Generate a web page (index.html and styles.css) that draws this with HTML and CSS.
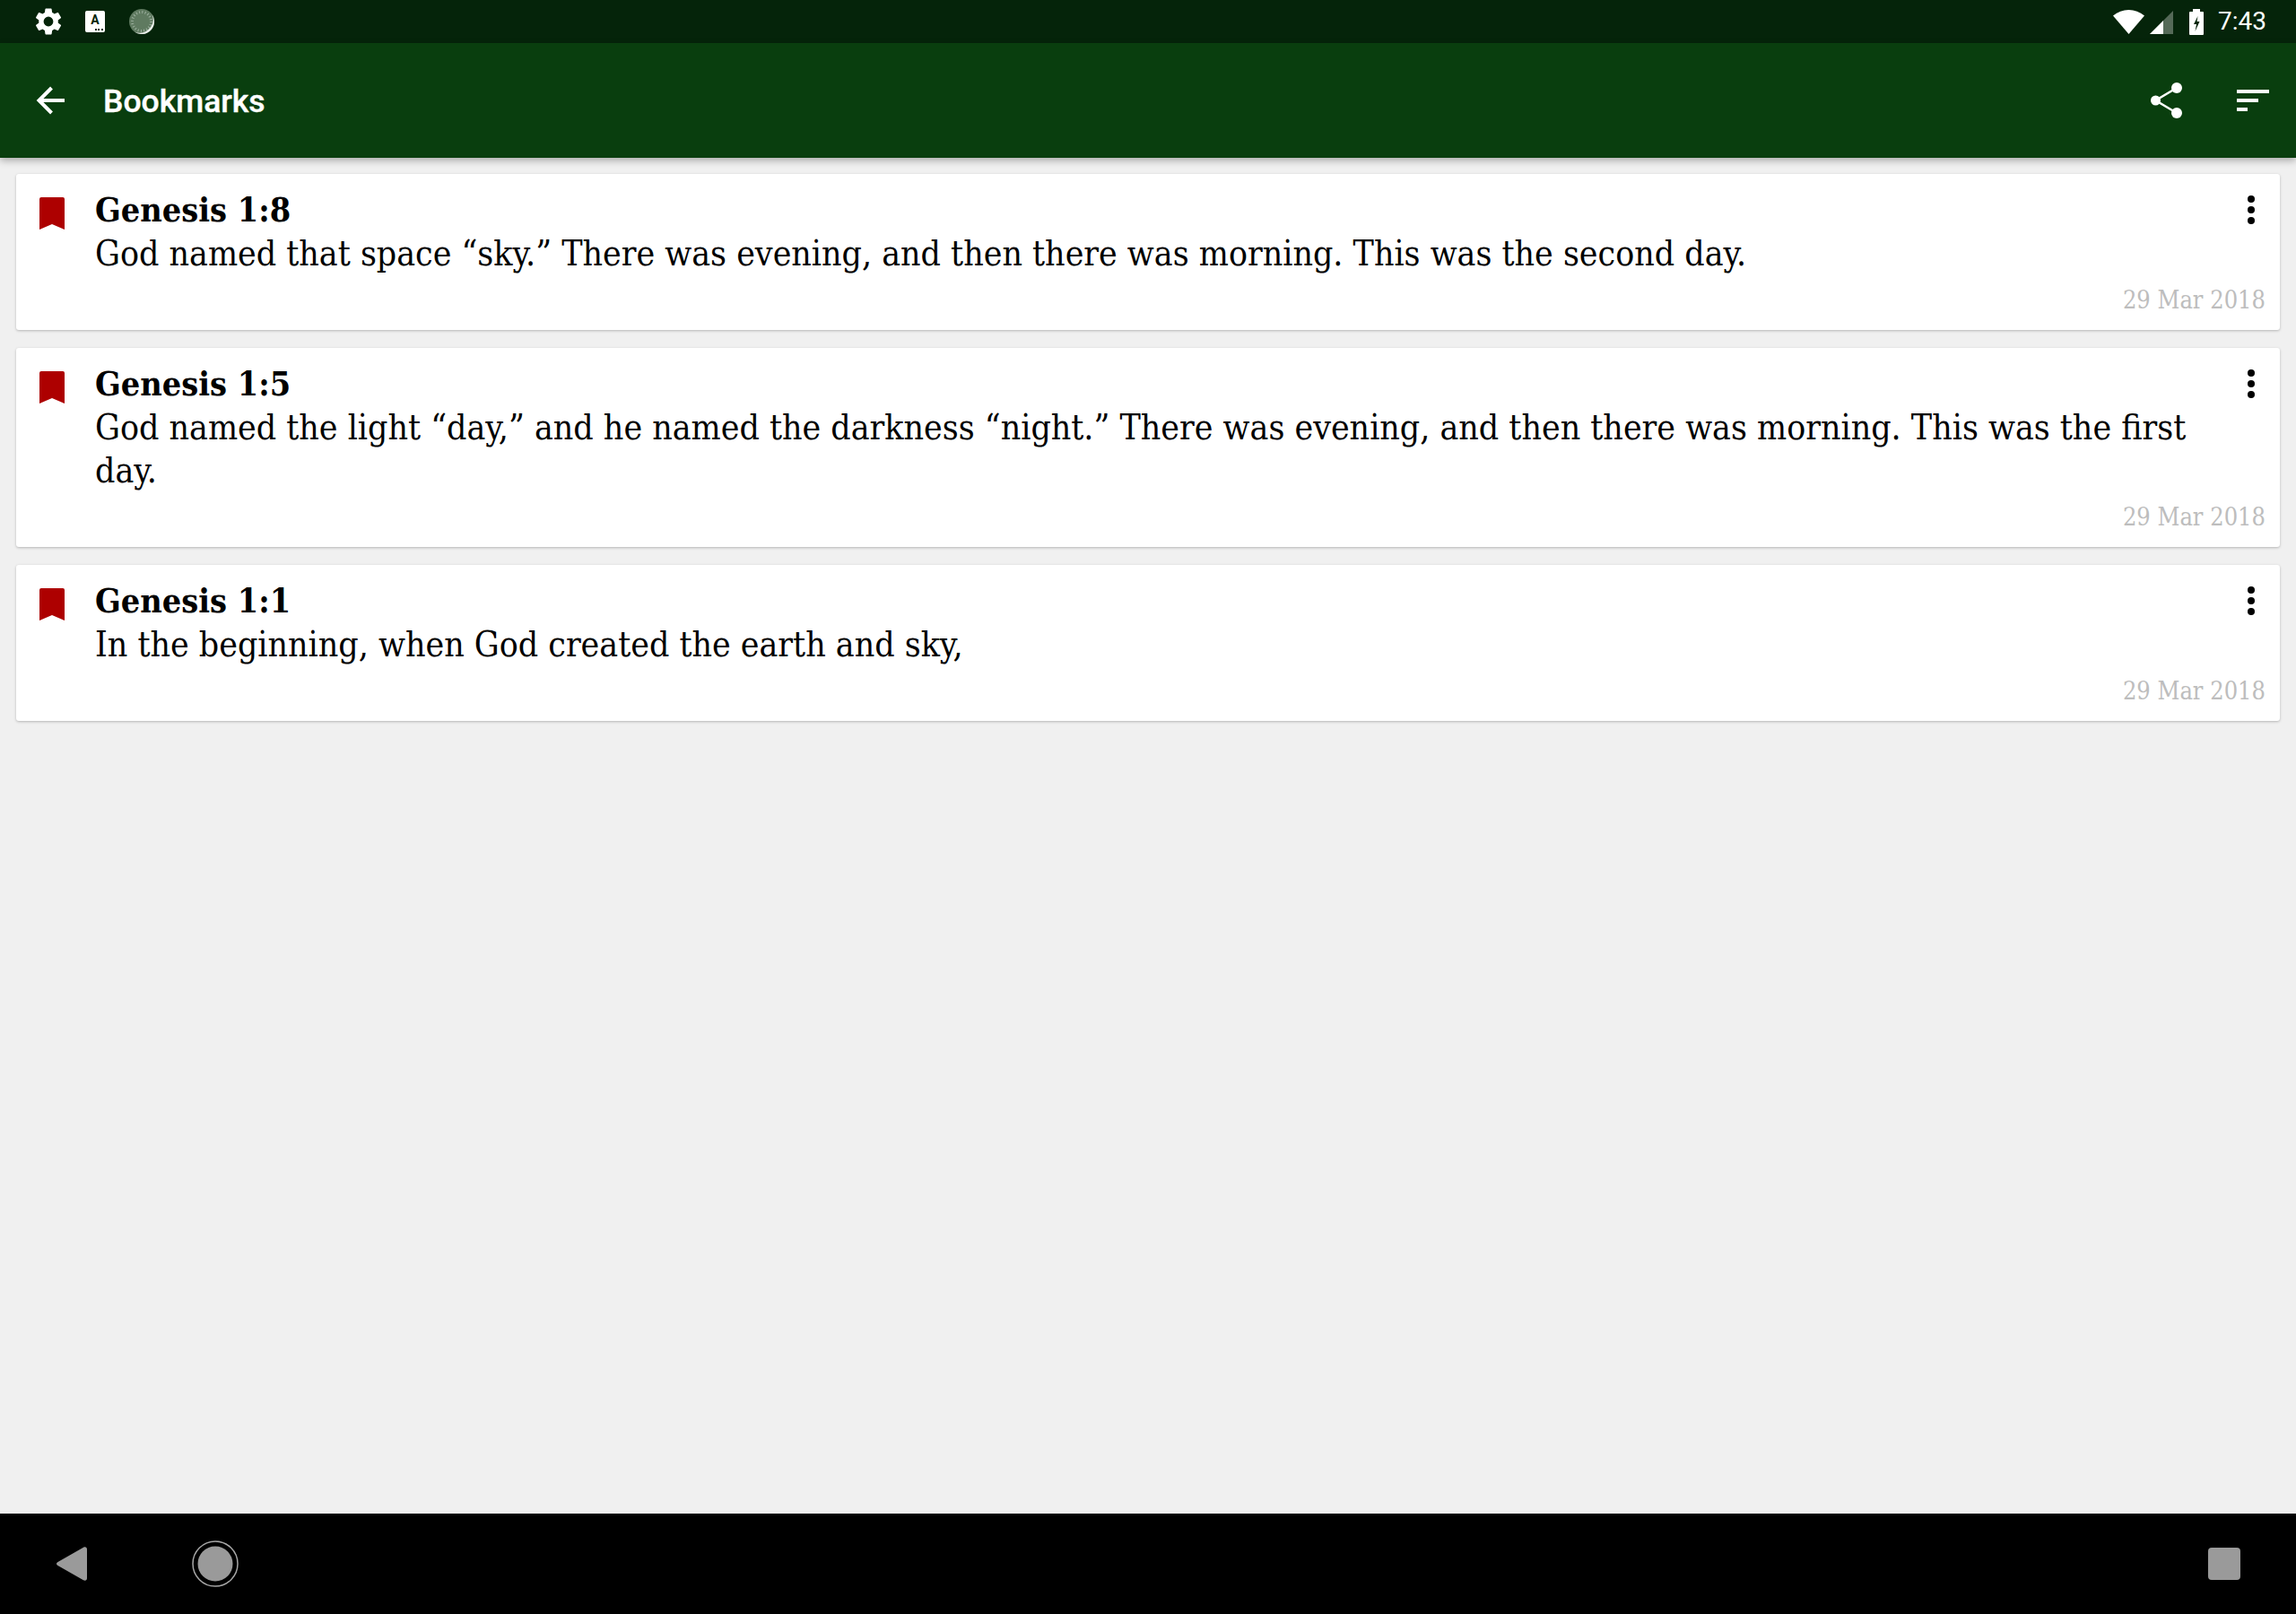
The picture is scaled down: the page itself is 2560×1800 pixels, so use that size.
FILE: index.html
```html
<!DOCTYPE html>
<html lang="en">
<head>
    <meta charset="UTF-8">
    <meta name="viewport" content="width=device-width, initial-scale=1.0">
    <title>Bookmarks</title>
    <link rel="stylesheet" href="styles.css">
</head>
<body>
    <div class="status-bar">
        <div class="status-left">
            <svg class="icon-gear" viewBox="0 0 24 24" fill="#fff"><path d="M19.14 12.94a7.07 7.07 0 0 0 .06-.94 7.07 7.07 0 0 0-.06-.94l2.03-1.58a.49.49 0 0 0 .12-.61l-1.92-3.32a.49.49 0 0 0-.59-.22l-2.39.96a7.03 7.03 0 0 0-1.62-.94l-.36-2.54a.48.48 0 0 0-.48-.41h-3.84a.48.48 0 0 0-.47.41l-.36 2.54c-.59.24-1.13.57-1.62.94l-2.39-.96a.48.48 0 0 0-.59.22L2.75 8.87a.48.48 0 0 0 .12.61l2.03 1.58a7.3 7.3 0 0 0 0 1.88l-2.03 1.58a.49.49 0 0 0-.12.61l1.92 3.32c.12.22.37.29.59.22l2.39-.96c.5.38 1.03.7 1.62.94l.36 2.54c.05.24.24.41.48.41h3.84c.24 0 .44-.17.47-.41l.36-2.54c.59-.24 1.13-.56 1.62-.94l2.39.96c.22.08.47 0 .59-.22l1.92-3.32a.48.48 0 0 0-.12-.61zM12 15.6a3.6 3.6 0 1 1 0-7.2 3.6 3.6 0 0 1 0 7.2z"/></svg>
            <div class="icon-keyboard">
                <span class="key-letter">A</span>
                <span class="key-dots"></span>
            </div>
            <svg class="icon-sync" viewBox="0 0 28 28">
                <circle cx="14" cy="14" r="14" fill="#5f7a60"/>
                <circle cx="14" cy="14" r="10.5" fill="none" stroke="#9db09f" stroke-width="3" stroke-dasharray="1 2.3"/>
                <path d="M25.500 6A14 14 0 0 1 6 25.500 15 15 0 0 0 25.500 6z" fill="#e9eee9"/>
            </svg>
        </div>
        <div class="status-right">
            <svg class="icon-wifi" viewBox="0 0 35 27"><path d="M17.500 0C11 0 5.200 2.200 0 6.500L17.500 27 35 6.500C29.800 2.200 24 0 17.500 0z" fill="#fff"/></svg>
            <svg class="icon-signal" viewBox="0 0 26 26">
                <path d="M26 0v26H0z" fill="#fff" fill-opacity=".32"/>
                <path d="M15 11v15H0z" fill="#fff"/>
            </svg>
            <svg class="icon-battery" viewBox="0 0 16 29"><path fill="#fff" fill-rule="evenodd" d="M4 0h8v3h3a1 1 0 0 1 1 1v24a1 1 0 0 1-1 1H1a1 1 0 0 1-1-1V4a1 1 0 0 1 1-1h3zM9.500 8 5 17h3l-1.500 8L11.500 14H8.500z"/></svg>
            <span class="clock">7:43</span>
        </div>
    </div>

    <div class="toolbar">
        <svg class="icon-back" viewBox="0 0 32 32"><path d="M32 16H3M17.500 2 3.500 16l14 14" fill="none" stroke="#fff" stroke-width="4"/></svg>
        <h1 class="toolbar-title">Bookmarks</h1>
        <svg class="icon-share" viewBox="0 0 36 40">
            <circle cx="29" cy="6" r="6" fill="#fff"/>
            <circle cx="5.500" cy="20" r="5.500" fill="#fff"/>
            <circle cx="29" cy="34" r="6" fill="#fff"/>
            <path d="M29 6 5.500 20 29 34" fill="none" stroke="#fff" stroke-width="2.500"/>
        </svg>
        <div class="icon-sort">
            <span class="sort-long"></span>
            <span class="sort-mid"></span>
            <span class="sort-short"></span>
        </div>
    </div>

    <div class="bookmark-list">
        <div class="card">
            <svg class="icon-bookmark" viewBox="0 0 28 36"><path d="M2 0h24a2 2 0 0 1 2 2v34l-14-6-14 6V2a2 2 0 0 1 2-2z" fill="#ad0000"/></svg>
            <div class="card-text">
                <div class="verse-ref">Genesis 1:8</div>
                <div class="verse-text">God named that space “sky.” There was evening, and then there was morning. This was the second day.</div>
            </div>
            <div class="more"><span></span><span></span><span></span></div>
            <div class="card-date">29 Mar 2018</div>
        </div>
        <div class="card">
            <svg class="icon-bookmark" viewBox="0 0 28 36"><path d="M2 0h24a2 2 0 0 1 2 2v34l-14-6-14 6V2a2 2 0 0 1 2-2z" fill="#ad0000"/></svg>
            <div class="card-text">
                <div class="verse-ref">Genesis 1:5</div>
                <div class="verse-text">God named the light “day,” and he named the darkness “night.” There was evening, and then there was morning. This was the first day.</div>
            </div>
            <div class="more"><span></span><span></span><span></span></div>
            <div class="card-date">29 Mar 2018</div>
        </div>
        <div class="card">
            <svg class="icon-bookmark" viewBox="0 0 28 36"><path d="M2 0h24a2 2 0 0 1 2 2v34l-14-6-14 6V2a2 2 0 0 1 2-2z" fill="#ad0000"/></svg>
            <div class="card-text">
                <div class="verse-ref">Genesis 1:1</div>
                <div class="verse-text">In the beginning, when God created the earth and sky,</div>
            </div>
            <div class="more"><span></span><span></span><span></span></div>
            <div class="card-date">29 Mar 2018</div>
        </div>
    </div>

    <div class="nav-bar">
        <div class="nav-left">
            <svg class="nav-back" viewBox="0 0 34 38"><path d="M1.500 17 30 .8c2-1.100 4-.3 4 2v32.400c0 2.300-2 3.100-4 2L1.500 21c-2-1.100-2-2.900 0-4z" fill="#9a9a9a"/></svg>
            <svg class="nav-home" viewBox="0 0 52 52">
                <circle cx="26" cy="26" r="25" fill="none" stroke="#a6a6a6" stroke-width="1.500"/>
                <circle cx="26" cy="26" r="19.500" fill="#9a9a9a"/>
            </svg>
        </div>
        <div class="nav-recent"></div>
    </div>
</body>
</html>
```

FILE: styles.css
```css
html, body {
    height: 100%;
}

body {
    margin: 0;
    display: flex;
    flex-direction: column;
    background-color: #f0f0f0;
    color: #000;
    font-family: Roboto, sans-serif;
}

svg {
    display: block;
    flex: none;
}

.status-bar {
    height: 48px;
    flex: none;
    display: flex;
    justify-content: space-between;
    align-items: center;
    padding: 0 33px 0 36px;
    background-color: #05240a;
}

.status-left {
    display: flex;
    align-items: center;
}

.icon-gear {
    width: 36px;
    height: 36px;
    margin-right: 23px;
}

.icon-keyboard {
    position: relative;
    width: 22px;
    height: 24px;
    margin-right: 27px;
    background-color: #fff;
    border-radius: 2px;
    color: #05240a;
    font-size: 14px;
    font-weight: 700;
    line-height: 21px;
    text-align: center;
}

.key-letter {
    display: block;
}

.key-dots {
    position: absolute;
    right: 2px;
    bottom: 2px;
    width: 9px;
    height: 2px;
    background: repeating-linear-gradient(90deg, #05240a 0 2px, transparent 2px 3.500px);
}

.icon-sync {
    width: 28px;
    height: 28px;
}

.status-right {
    display: flex;
    align-items: center;
}

.icon-wifi {
    width: 35px;
    height: 27px;
    margin-right: 6px;
}

.icon-signal {
    width: 26px;
    height: 26px;
    margin-right: 18px;
    margin-top: 2px;
}

.icon-battery {
    width: 16px;
    height: 29px;
    margin-right: 16px;
}

.clock {
    color: #fff;
    font-size: 28px;
    line-height: 48px;
}

.toolbar {
    height: 128px;
    flex: none;
    display: flex;
    align-items: center;
    padding: 0 30px 0 40px;
    background-color: #093e0e;
    box-shadow: 0 3px 8px rgba(0, 0, 0, 0.3);
    position: relative;
}

.icon-back {
    width: 32px;
    height: 32px;
}

.toolbar-title {
    flex: 1;
    margin: 2px 0 0 43px;
    color: #fff;
    font-size: 35.500px;
    font-weight: 500;
    -webkit-text-stroke: 0.4px #fff;
}

.icon-share {
    width: 36px;
    height: 40px;
    margin-right: 60px;
}

.icon-sort {
    width: 36px;
    display: flex;
    flex-direction: column;
    gap: 6px;
}

.icon-sort span {
    display: block;
    height: 4px;
    background-color: #fff;
}

.sort-long {
    width: 36px;
}

.sort-mid {
    width: 24px;
}

.sort-short {
    width: 12px;
}

.bookmark-list {
    flex: 1;
    display: flex;
    flex-direction: column;
    gap: 20px;
    padding: 18px 18px 0;
}

.card {
    display: grid;
    grid-template-columns: auto 1fr auto;
    padding: 16px 16px 17px 26px;
    background-color: #fff;
    border-radius: 3px;
    box-shadow: 0 1px 3px rgba(0, 0, 0, 0.25);
    font-family: "DejaVu Serif Condensed", "DejaVu Serif", serif;
    font-stretch: condensed;
}

.icon-bookmark {
    width: 28px;
    height: 36px;
    margin: 10px 34px 0 0;
}

.verse-ref {
    font-size: 37.500px;
    font-weight: 700;
    line-height: 49px;
}

.verse-text {
    font-size: 38.900px;
    line-height: 48px;
}

.more {
    width: 40px;
    display: flex;
    flex-direction: column;
    align-items: flex-end;
    gap: 4px;
    padding: 8px 12px 0 0;
    box-sizing: border-box;
}

.more span {
    width: 8px;
    height: 8px;
    border-radius: 50%;
    background-color: #000;
}

.card-date {
    grid-column: 1 / -1;
    margin-top: 12px;
    color: #bdbdbd;
    font-size: 27px;
    line-height: 32px;
    text-align: right;
}

.nav-bar {
    height: 112px;
    flex: none;
    display: flex;
    justify-content: space-between;
    align-items: center;
    padding: 0 62px 0 63px;
    background-color: #000;
}

.nav-left {
    display: flex;
    align-items: center;
    gap: 117px;
}

.nav-back {
    width: 34px;
    height: 38px;
}

.nav-home {
    width: 52px;
    height: 52px;
}

.nav-recent {
    width: 36px;
    height: 36px;
    border-radius: 4px;
    background-color: #9a9a9a;
}
```
